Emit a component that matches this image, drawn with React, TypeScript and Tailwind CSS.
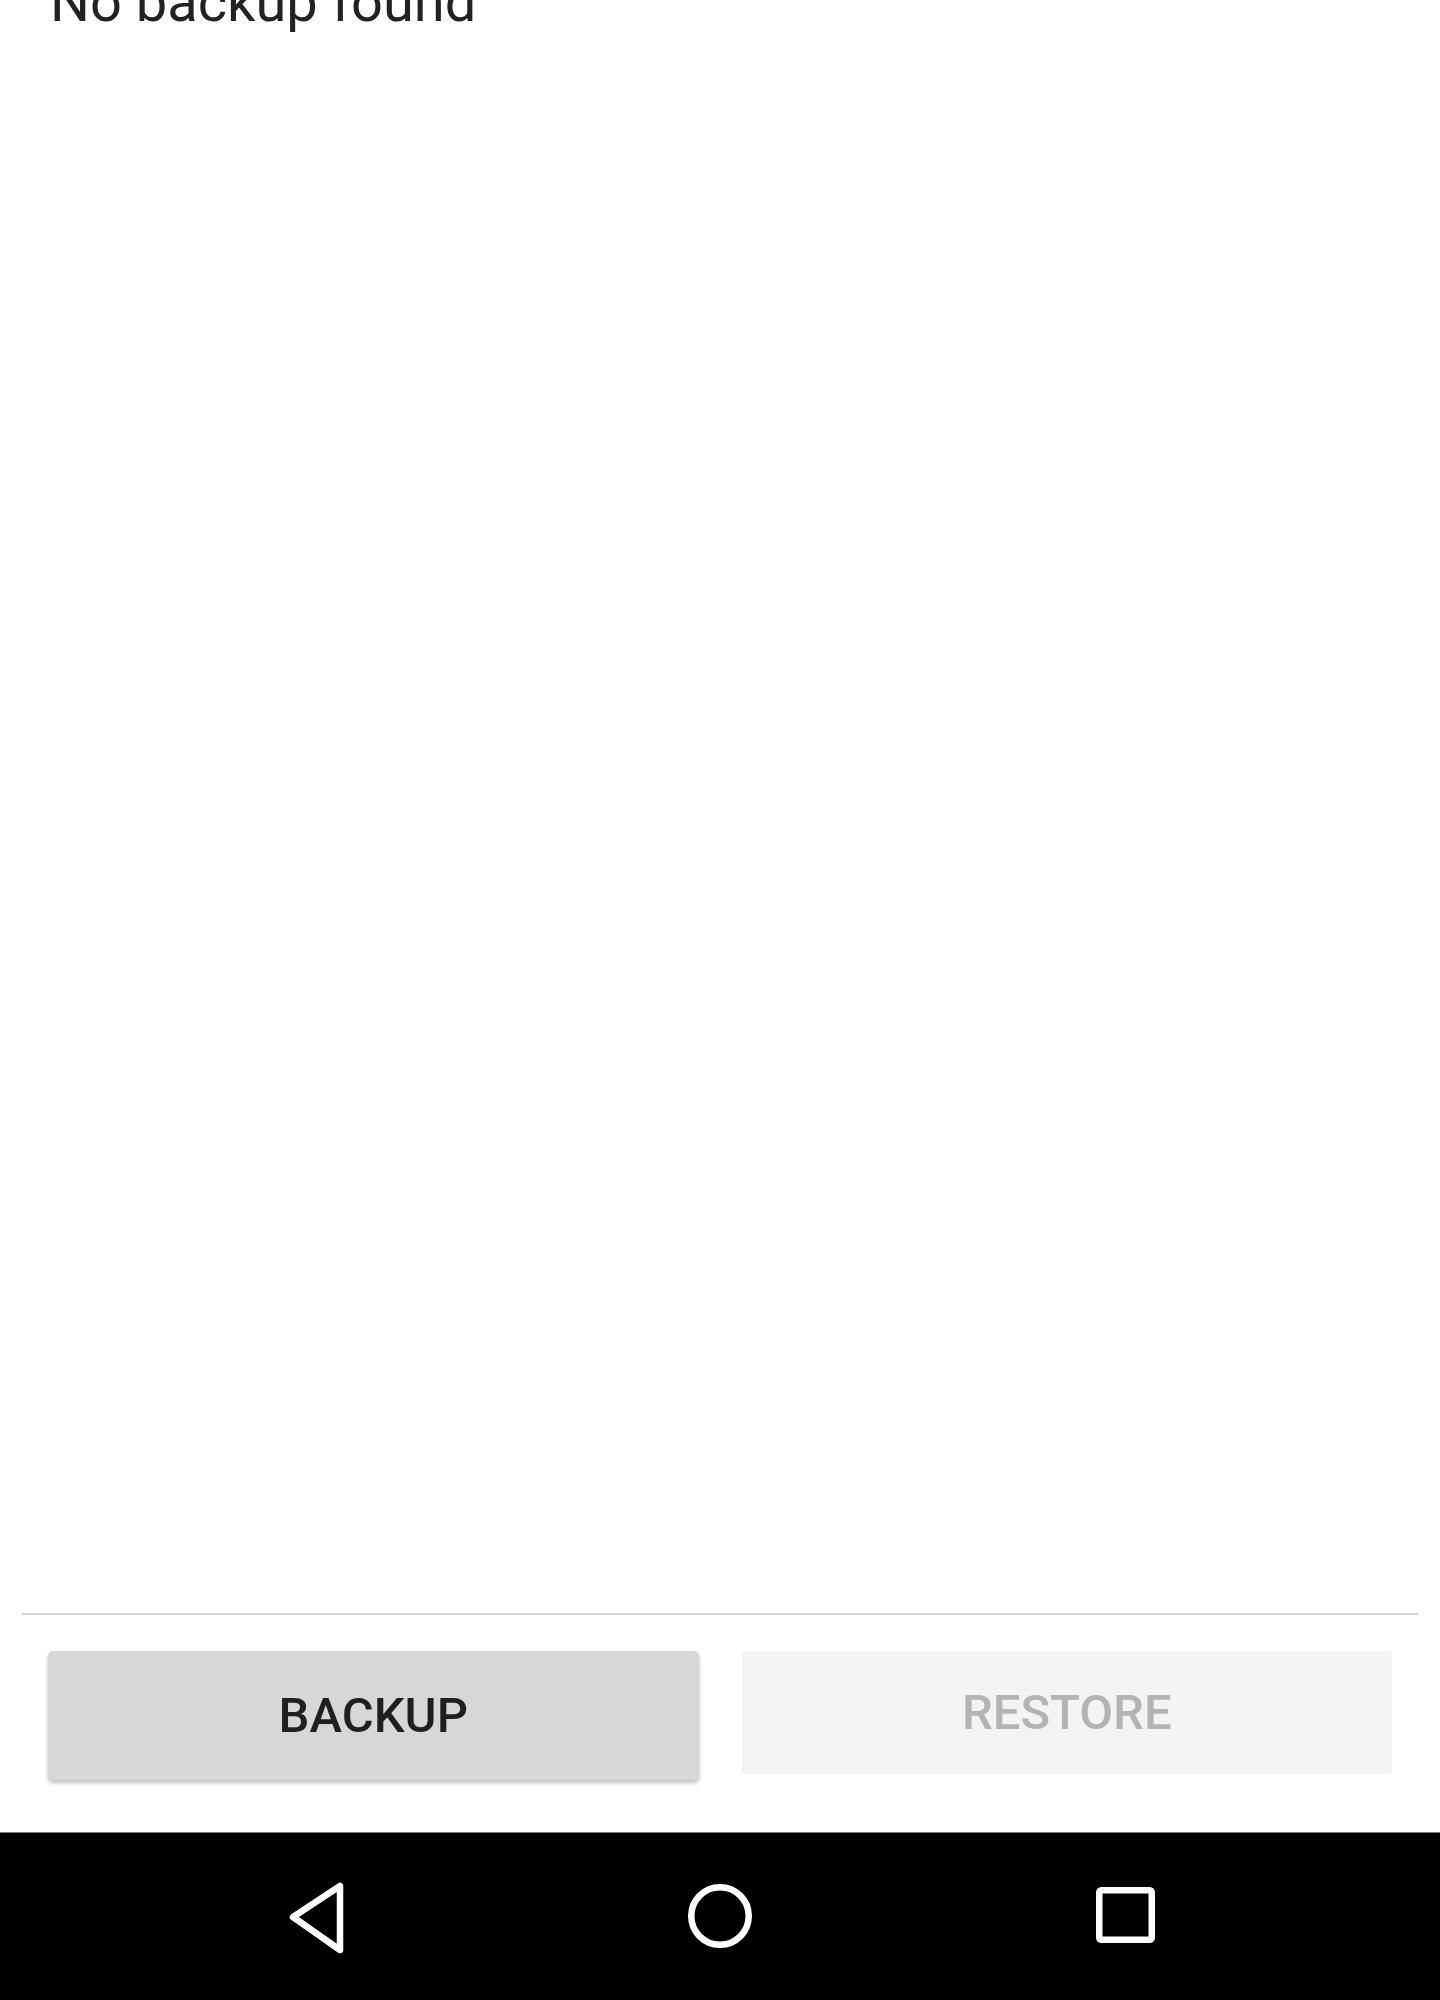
export default function App() {
  return (
    <div className="flex flex-col h-[2000px] w-full overflow-hidden bg-white font-['Roboto','Liberation_Sans',sans-serif]">
      <p className="mt-[-26px] pl-[50px] text-[56px] leading-[56px] text-[#222222]">
        No backup found
      </p>

      <div className="flex-1" />

      <div className="mx-[22px] h-[2px] bg-[#d4d4d4]" />

      <div className="grid grid-cols-2 gap-[43px] px-[48px] pt-[36px] pb-[52px] items-start">
        <button className="h-[129px] rounded-[5px] bg-[#d6d7d7] text-[49px] font-medium text-[#1f1f1f] shadow-[0_3px_4px_rgba(0,0,0,0.25)]">
          BACKUP
        </button>
        <button className="h-[123px] rounded-[4px] bg-[#f2f3f3] text-[49px] font-medium text-[#b3b3b3]">
          RESTORE
        </button>
      </div>

      <div className="h-[168px] bg-black border-t border-[#7a7a7a] relative">
        <svg width="60" height="74" viewBox="0 0 60 74" className="absolute left-[286px] top-[48px]">
          <path d="M54 5 L54 69 L7 36 Z" fill="none" stroke="white" strokeWidth="6.5" strokeLinejoin="round" />
        </svg>
        <svg width="72" height="72" viewBox="0 0 72 72" className="absolute left-[684px] top-[47px]">
          <circle cx="36" cy="36" r="28.75" fill="none" stroke="white" strokeWidth="6.5" />
        </svg>
        <svg width="64" height="64" viewBox="0 0 64 64" className="absolute left-[1093px] top-[53px]">
          <rect x="6.25" y="4.25" width="52.5" height="49.5" rx="2" fill="none" stroke="white" strokeWidth="6.5" />
        </svg>
      </div>
    </div>
  );
}
